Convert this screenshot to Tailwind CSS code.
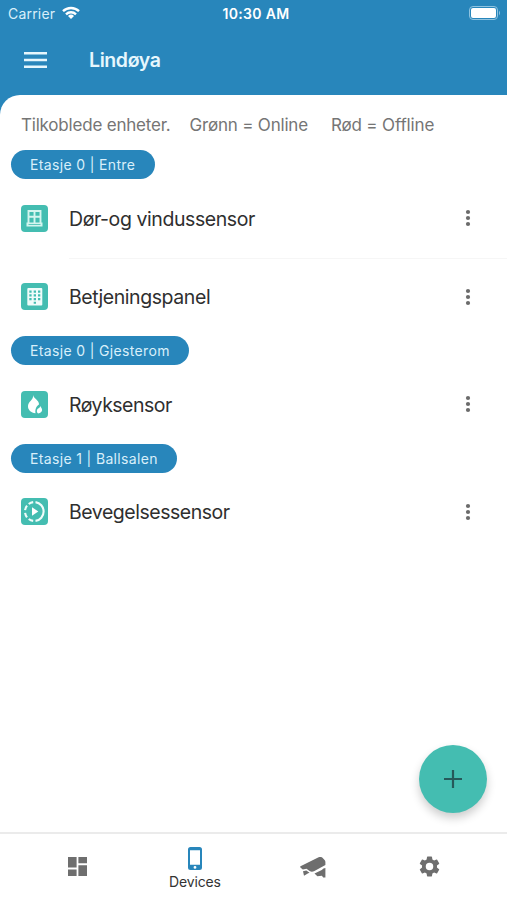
<!DOCTYPE html>
<html lang="no">
<head>
    <meta charset="UTF-8">
    <meta name="viewport" content="width=device-width, initial-scale=1.0">
    <title>Lindøya</title>
    <script src="https://cdn.jsdelivr.net/npm/@tailwindcss/browser@4"></script>
</head>
<body class="relative flex h-[900px] w-[507px] flex-col overflow-hidden bg-[#2886bb] font-['Inter','Liberation_Sans',sans-serif] whitespace-nowrap">

<!-- Status bar -->
<div class="grid h-[27px] grid-cols-3 items-center pr-[6px] pl-[8px] text-white">
    <div class="flex items-center gap-[7px]">
        <span class="text-[14px] tracking-[0.2px] text-[#d8effa]">Carrier</span>
        <svg class="-mt-[2px] h-[13px] w-[18px]" viewBox="0 0 18 13" fill="none" stroke="currentColor" stroke-width="2.4">
            <path d="M1 5.2a11.5 11.5 0 0 1 16 0"/>
            <path d="M4 8.3a7.2 7.2 0 0 1 10 0"/>
            <path d="M9 13 6 9.9a4.3 4.3 0 0 1 6 0z" fill="currentColor" stroke="none"/>
        </svg>
    </div>
    <span class="pl-[3px] text-center text-[14px] font-semibold tracking-[0.3px]">10:30 AM</span>
    <svg class="-mt-px h-[14px] w-[32px] justify-self-end" viewBox="0 0 32 14">
        <rect x="0.5" y="0.5" width="28" height="13" rx="3.5" fill="none" stroke="#8fc3e0"/>
        <rect x="2" y="2" width="25" height="10" rx="2" fill="#fff"/>
        <path d="M30 4.5q2 2.5 0 5z" fill="#8fc3e0"/>
    </svg>
</div>

<!-- Header -->
<header class="flex h-[68px] items-start pt-[20px] pl-[24px]">
    <svg class="mt-[5px] h-[16px] w-[23px]" viewBox="0 0 23 16" fill="#e6f7fd">
        <path d="M0 0h23v2.6H0zM0 6.7h23v2.6H0zM0 13.4h23V16H0z"/>
    </svg>
    <h1 class="ml-[42px] text-[19.5px] leading-[26px] font-semibold tracking-[-0.4px] text-[#e6f7fd]">Lindøya</h1>
</header>

<!-- Content -->
<main class="flex-1 rounded-tl-[20px] bg-white">
    <p class="flex h-[55px] items-center gap-[19px] pt-[7px] pl-[21px] text-[17px] tracking-[-0.15px] text-[#757575]">
        <span class="tracking-[-0.2px]">Tilkoblede enheter.</span>
        <span class="tracking-[-0.2px]">Grønn = Online</span>
        <span class="ml-[4px]">Rød = Offline</span>
    </p>

    <h2 class="ml-[11px] flex h-[29px] w-[144px] items-center rounded-full bg-[#2886bb] pl-[19px] text-[14px] tracking-[0.35px] text-[#d8effa]">Etasje 0 | Entre</h2>
    <div class="relative flex h-[78.5px] items-center pr-[34px] pl-[21px]">
        <svg class="size-[27px]" viewBox="0 0 27 27">
            <rect width="27" height="27" rx="4" fill="#44bdb1"/>
            <path d="M7.500 18V6h12v12M13.500 6v12M7.500 11.800h12" fill="none" stroke="#d5f5ef" stroke-width="1.900"/>
            <path d="M5.500 17.500h16v4h-16z" fill="#d5f5ef"/>
            <path d="M7.500 19.200h12v.8h-12z" fill="#44bdb1"/>
        </svg>
        <span class="ml-[21px] pt-[2px] text-[19.5px] tracking-[-0.42px] text-[#2f2f2f]">Dør-og vindussensor</span>
        <svg class="ml-auto h-[18px] w-[10px]" viewBox="0 0 10 18" fill="#6b6b6b"><circle cx="5" cy="3" r="2.1"/><circle cx="5" cy="9" r="2.1"/><circle cx="5" cy="15" r="2.1"/></svg>
        <div class="absolute right-0 -bottom-px left-[69px] h-px bg-[#f6f6f6]"></div>
    </div>
    <div class="flex h-[78.5px] items-center pr-[34px] pl-[21px]">
        <svg class="size-[27px]" viewBox="0 0 27 27">
            <rect width="27" height="27" rx="4" fill="#44bdb1"/>
            <rect x="6.300" y="5" width="15" height="17.500" rx="1" fill="#f0fcfa"/>
            <path d="M8.300 7.500h2.300v2.200H8.300zM12.700 7.500H15v2.200h-2.300zM17 7.500h2.300v2.200H17zM8.300 11.300h2.300v2.200H8.300zM12.700 11.300H15v2.200h-2.300zM17 11.300h2.300v2.200H17zM8.300 15h2.300v2.200H8.300zM12.700 15H15v2.200h-2.300zM17 15h2.300v2.200H17zM12.700 18.700H15v2h-2.300z" fill="#44bdb1"/>
        </svg>
        <span class="ml-[21px] pt-[2px] text-[19.5px] tracking-[-0.42px] text-[#2f2f2f]">Betjeningspanel</span>
        <svg class="ml-auto h-[18px] w-[10px]" viewBox="0 0 10 18" fill="#6b6b6b"><circle cx="5" cy="3" r="2.1"/><circle cx="5" cy="9" r="2.1"/><circle cx="5" cy="15" r="2.1"/></svg>
    </div>

    <h2 class="ml-[11px] flex h-[29px] w-[178px] items-center rounded-full bg-[#2886bb] pl-[19px] text-[14px] tracking-[0.35px] text-[#d8effa]">Etasje 0 | Gjesterom</h2>
    <div class="flex h-[78.5px] items-center pr-[34px] pl-[21px]">
        <svg class="size-[27px]" viewBox="0 0 27 27">
            <rect width="27" height="27" rx="4" fill="#44bdb1"/>
            <path d="M12.300 3.800c-.3 3.700 6 5.200 5.700 9.800-2 1.300-4.200 3.900-3.500 8.700C10 21.800 6.800 18.800 7 15c.2-4.500 5.500-5.800 5.300-11.200z" fill="#fff"/>
            <path d="M19.500 14.800c-.1 1.600 1.700 2.400 1.600 4.300-.1 1.900-1.600 3.200-3.900 3.300-1-.8-1.500-1.700-1.300-3 .3-2.100 3.300-2.200 3.600-4.600z" fill="#fff"/>
        </svg>
        <span class="ml-[21px] pt-[2px] text-[19.5px] tracking-[-0.5px] text-[#2f2f2f]">Røyksensor</span>
        <svg class="ml-auto h-[18px] w-[10px]" viewBox="0 0 10 18" fill="#6b6b6b"><circle cx="5" cy="3" r="2.1"/><circle cx="5" cy="9" r="2.1"/><circle cx="5" cy="15" r="2.1"/></svg>
    </div>

    <h2 class="ml-[11px] flex h-[29px] w-[166px] items-center rounded-full bg-[#2886bb] pl-[19px] text-[14px] tracking-[0.35px] text-[#d8effa]">Etasje 1 | Ballsalen</h2>
    <div class="flex h-[78.5px] items-center pr-[34px] pl-[21px]">
        <svg class="size-[27px]" viewBox="0 0 27 27">
            <rect width="27" height="27" rx="4" fill="#44bdb1"/>
            <g fill="none" stroke="#f0fcfa" stroke-width="2.1">
                <path d="M14.500 4.100a9.500 9.500 0 0 1 0 18.800"/>
                <path d="M12.200 4.100a9.500 9.500 0 0 0-4.500 1.900M6 7.700a9.500 9.500 0 0 0-1.900 4.500M4.100 14.800A9.500 9.500 0 0 0 6 19.300M7.700 21a9.500 9.500 0 0 0 4.500 1.900"/>
            </g>
            <path d="M11 9.200v8.600l6.300-4.300z" fill="#fff"/>
        </svg>
        <span class="ml-[21px] pt-[2px] text-[19.5px] tracking-[-0.47px] text-[#2f2f2f]">Bevegelsessensor</span>
        <svg class="ml-auto h-[18px] w-[10px]" viewBox="0 0 10 18" fill="#6b6b6b"><circle cx="5" cy="3" r="2.1"/><circle cx="5" cy="9" r="2.1"/><circle cx="5" cy="15" r="2.1"/></svg>
    </div>
</main>

<!-- Add button -->
<button class="absolute right-[20px] bottom-[87px] flex size-[68px] items-center justify-center rounded-full bg-[#44bdb1] shadow-[0_5px_10px_rgba(0,0,0,0.2)]">
    <svg class="size-[18px]" viewBox="0 0 18 18" stroke="#26595a" stroke-width="2.2"><path d="M9 0v18M0 9h18"/></svg>
</button>

<!-- Bottom navigation -->
<nav class="relative grid h-[68px] grid-cols-4 border-t-2 border-[#ebebeb] bg-white px-[19px] text-[#6e6e6e]">
    <a class="flex justify-center pt-[23px]">
        <svg class="h-[19px] w-[19px]" viewBox="0 0 19 19" fill="currentColor">
            <path d="M0 0h8.600v10.600H0zM10.400 0H19v6.300h-8.600zM0 12.500h8.600V19H0zM10.400 8.200H19V19h-8.600z"/>
        </svg>
    </a>
    <a class="flex flex-col items-center pt-[13px]">
        <svg class="h-[23px] w-[14px]" viewBox="0 0 14 23">
            <path fill="#2886bb" fill-rule="evenodd" d="M2.500 0h9A2.500 2.500 0 0 1 14 2.500v18a2.500 2.500 0 0 1-2.500 2.500h-9A2.500 2.500 0 0 1 0 20.500v-18A2.500 2.500 0 0 1 2.500 0zM2 3.200v14.600h10V3.200zM7 19a1.400 1.400 0 1 0 0 2.800A1.400 1.400 0 0 0 7 19z"/>
        </svg>
        <span class="mt-[2px] text-[14px] leading-[20px] tracking-[-0.15px] text-[#333]">Devices</span>
    </a>
    <a class="flex justify-center pt-[23px] pl-px">
        <svg class="h-[21px] w-[26px]" viewBox="0 0 26 21" fill="currentColor">
            <path d="M.5 9.200 18.600.3q2-.9 3.600.2l2.400 2.500q.8.800.8 2v3L14 14.300q-2.300.9-4.400-.2l-3.100-2.300-3.700.8L.4 10.600q-.5-.9.1-1.400z"/>
            <path d="M3 14.300l3.300-.9 3.300 2.300-1.400.5-4.200 2.500zM14.500 16.600l7.300-3.500q1.600-2 3.600-2.100v9.500h-2.200l-1.300-1.700-4.500.4z"/>
        </svg>
    </a>
    <a class="flex justify-center pt-[20px]">
        <svg class="size-[25px]" viewBox="0 0 24 24" fill="currentColor">
            <path d="M19.140 12.940c.04-.3.060-.61.060-.94 0-.32-.02-.64-.07-.94l2.030-1.580a.49.49 0 0 0 .12-.61l-1.920-3.320a.49.49 0 0 0-.59-.22l-2.390.96a7 7 0 0 0-1.620-.94l-.36-2.540a.48.48 0 0 0-.48-.41h-3.840a.47.47 0 0 0-.47.41l-.36 2.540a7.300 7.300 0 0 0-1.620.94l-2.390-.96a.47.47 0 0 0-.59.22L2.740 8.870a.47.47 0 0 0 .12.61l2.030 1.580a6 6 0 0 0-.02 1.880l-2.030 1.580a.49.49 0 0 0-.12.61l1.920 3.320c.12.22.37.29.59.22l2.390-.96c.5.38 1.030.7 1.620.94l.36 2.540c.05.24.24.41.48.41h3.840c.24 0 .44-.17.47-.41l.36-2.540a7 7 0 0 0 1.620-.94l2.390.96c.22.080.47 0 .59-.22l1.920-3.320a.47.47 0 0 0-.12-.61zM12 15.600a3.600 3.600 0 1 1 0-7.200 3.600 3.600 0 0 1 0 7.200z"/>
        </svg>
    </a>
</nav>
</body>
</html>
